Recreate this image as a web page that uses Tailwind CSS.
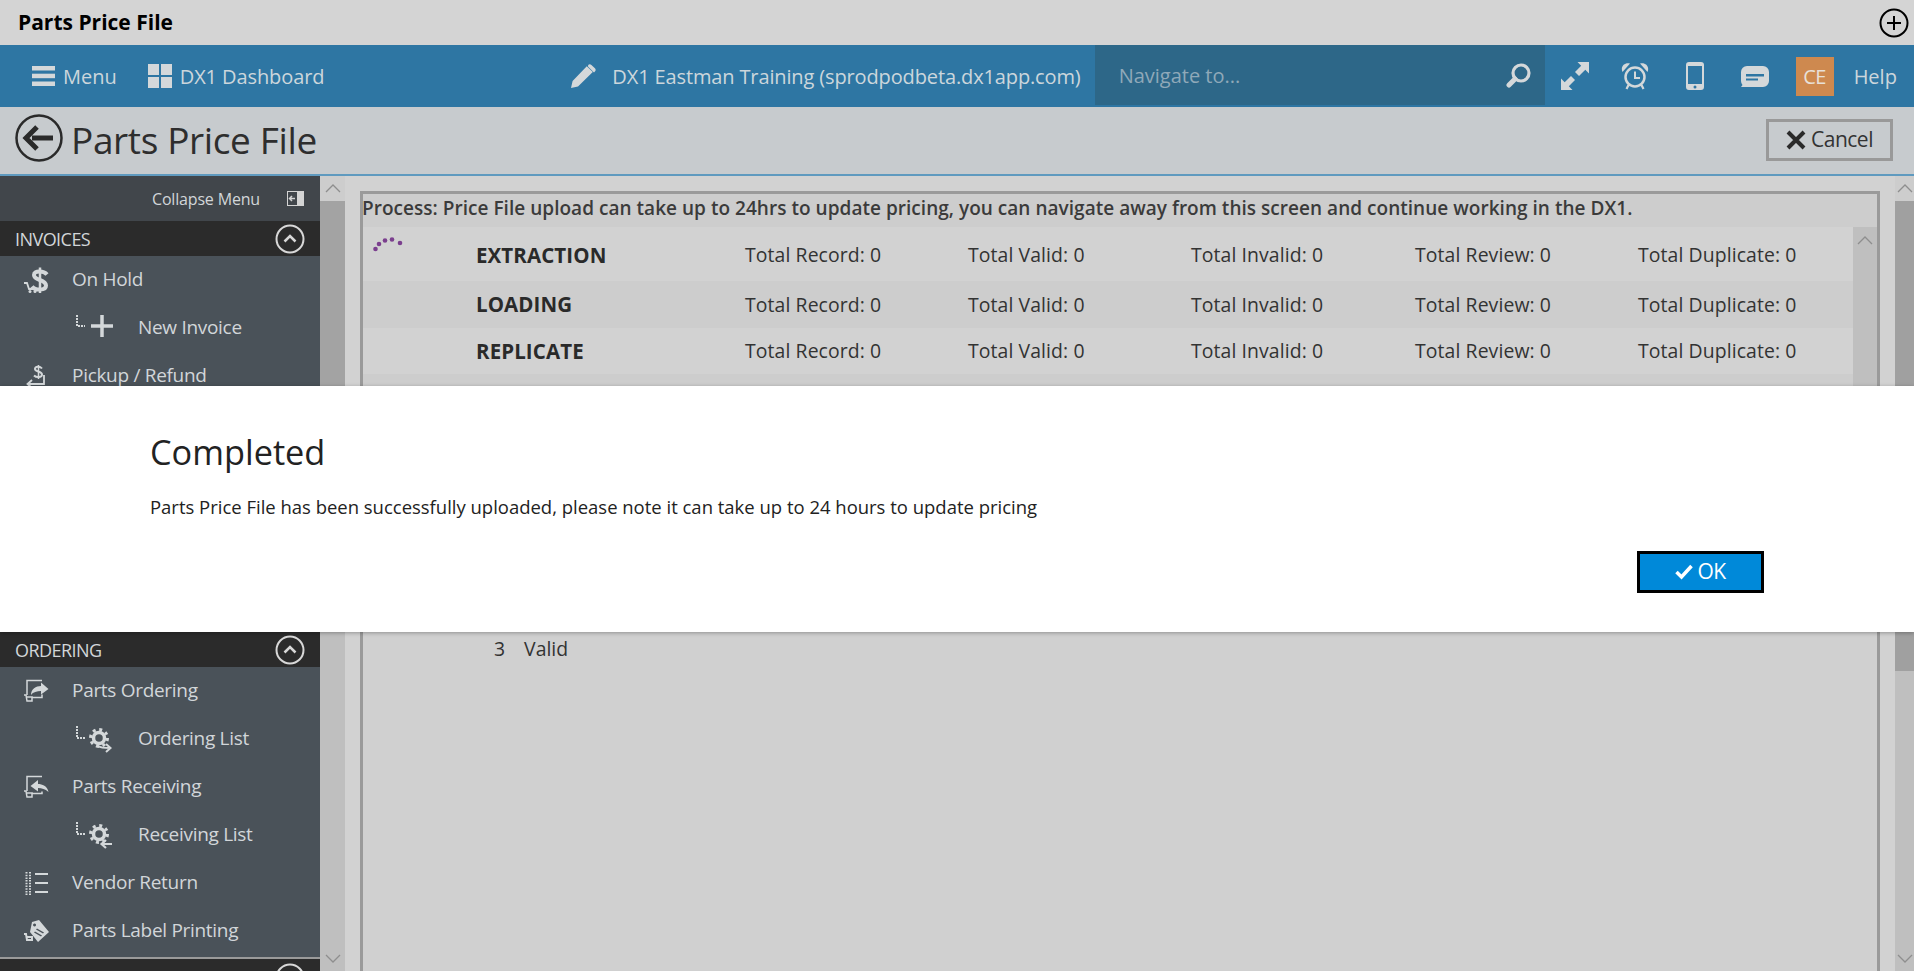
<!DOCTYPE html>
<html><head><meta charset="utf-8"><script src="https://cdn.jsdelivr.net/npm/@tailwindcss/browser@4"></script></head>
<body class="m-0 overflow-hidden">
<div class="relative flex h-[971px] w-[1914px] flex-col overflow-hidden bg-[#d2d2d2] font-['Open_Sans','Noto_Sans',sans-serif] text-[#333]">

<!-- title bar -->
<header class="flex h-[45px] shrink-0 items-center justify-between bg-[#d4d4d4] pl-[18px] pr-[5px]">
  <h1 class="text-[21px] font-bold text-black">Parts Price File</h1>
  <svg class="h-[30px] w-[30px]" viewBox="0 0 30 30" fill="none" stroke="#000" stroke-width="2"><circle cx="15" cy="15" r="13.5"/><path d="M8 15h14M15 8v14"/></svg>
</header>

<!-- nav -->
<nav class="flex h-[62px] shrink-0 items-center bg-[#2e76a3] text-[20px] text-[#ccd6dc]">
  <div class="flex items-center pl-[32px]">
    <svg class="h-[20px] w-[23px]" viewBox="0 0 23 20" fill="#d4d8da"><rect width="23" height="4.5"/><rect y="7.7" width="23" height="4.5"/><rect y="15.5" width="23" height="4.5"/></svg>
    <span class="ml-[8px] pt-[2px]">Menu</span>
  </div>
  <div class="ml-[31px] flex items-center">
    <svg class="h-[24px] w-[24px]" viewBox="0 0 24 24" fill="#d4d8da"><rect width="11" height="11"/><rect x="13" width="11" height="11"/><rect y="13" width="11" height="11"/><rect x="13" y="13" width="11" height="11"/></svg>
    <span class="ml-[8px] pt-[2px] tracking-[-0.1px]">DX1 Dashboard</span>
  </div>
  <div class="ml-[247px] flex items-center">
    <svg class="h-[24px] w-[25px]" viewBox="0 0 25 24" fill="#d4d8da"><path d="M0 24l1.600-7L15.800 2.200l6 5.800L7 22.500zM17.200.9c1-1 2.200-1 3.200 0l3.500 3.400c1 1 1 2.200 0 3.200l-.9 .9-6-5.800z"/></svg>
    <span class="ml-[16px] pt-[2px] tracking-[-0.13px]">DX1 Eastman Training (sprodpodbeta.dx1app.com)</span>
  </div>
  <div class="ml-[14px] flex h-[60px] w-[450px] items-center justify-between self-start bg-[#2d6788] pl-[24px] pr-[14px] text-[#8fa9b9]">
    <span class="pt-[2px]">Navigate to...</span>
    <svg class="h-[25px] w-[25px]" viewBox="0 0 25 25" fill="none" stroke="#d4d8da"><circle cx="15" cy="10" r="8" stroke-width="3.200"/><path d="M9 16L3 22" stroke-width="5" stroke-linecap="round"/></svg>
  </div>
  <div class="flex flex-1 items-center">
    <svg class="ml-[16px] h-[28px] w-[28px]" viewBox="0 0 28 28" fill="#d4d8da"><path d="M16.500 0H28V11.500L24.300 7.800 18 14 14 10 20.200 3.700zM11.500 28H0V16.500L3.700 20.200 10 14 14 18 7.800 24.300z"/></svg>
    <svg class="ml-[32px] h-[28px] w-[28px]" viewBox="0 0 28 28" fill="none" stroke="#d4d8da"><circle cx="14" cy="15" r="9.500" stroke-width="2.500"/><path d="M14 9.500V16h5" stroke-width="2"/><path d="M1.500 10C-1 4 4 0 9 1.500zM26.500 10C29 4 24 0 19 1.500z" fill="#d4d8da" stroke="none"/><path d="M7.500 23l-2 4M20.500 23l2 4" stroke-width="2.200"/></svg>
    <svg class="ml-[37px] h-[28px] w-[18px]" viewBox="0 0 18 28" fill="#d4d8da"><path fill-rule="evenodd" d="M3 0h12a3 3 0 0 1 3 3v22a3 3 0 0 1-3 3H3a3 3 0 0 1-3-3V3a3 3 0 0 1 3-3zM2 4v18h14V4z"/><circle cx="9" cy="25" r="1.500" fill="#2e76a3"/></svg>
    <svg class="ml-[37px] h-[21px] w-[28px]" viewBox="0 0 28 21" fill="#d4d8da"><path fill-rule="evenodd" d="M6 0h16a6 6 0 0 1 6 6v9a6 6 0 0 1-6 6H0l1.500-2A6 6 0 0 1 0 15V6a6 6 0 0 1 6-6zM5 8v2.400h18V8zM5 12.500v2.100h12v-2.100z"/></svg>
    <span class="ml-[27px] flex h-[39px] w-[38px] items-center justify-center bg-[#ce894f] pt-[2px] tracking-[-0.5px] text-[#e8e0d8]">CE</span>
    <span class="ml-[20px] pt-[2px]">Help</span>
  </div>
</nav>

<!-- page header -->
<div class="flex h-[69px] shrink-0 items-center justify-between border-b-2 border-[#5f9abf] bg-[#c7cbce] pl-[15px] pr-[21px]">
  <div class="flex items-center">
    <svg class="mb-[5px] h-[48px] w-[48px]" viewBox="0 0 48 48" fill="none" stroke="#2a2a2a"><circle cx="24" cy="24" r="22.500" stroke-width="2.500"/><path d="M38 24H17" stroke-width="5"/><path d="M22 13L11 24l11 11" stroke-width="5"/></svg>
    <span class="mb-[2px] ml-[8px] text-[37px] tracking-[-0.37px] text-[#2e2e2e]">Parts Price File</span>
  </div>
  <button class="mb-[2px] flex h-[42px] w-[127px] items-center justify-center border-[3px] border-[#999] text-[21px] tracking-[-0.5px] text-[#333]">
    <svg class="mr-[5px] h-[20px] w-[20px]" viewBox="0 0 20 20" stroke="#2a2a2a" stroke-width="4"><path d="M2 2l16 16M18 2L2 18"/></svg>Cancel
  </button>
</div>

<div class="flex min-h-0 flex-1">
  <!-- sidebar -->
  <aside class="w-[320px] shrink-0 overflow-hidden bg-[#4a5259] text-[19px] tracking-[-0.3px] text-[#d2d6d9]">
    <div class="flex h-[45px] items-center justify-end bg-[#41464b] pr-[16px] text-[16px] tracking-[-0.17px]">
      <span class="mr-[27px]">Collapse Menu</span>
      <svg class="h-[15px] w-[17px]" viewBox="0 0 17 15"><rect x=".5" y=".5" width="16" height="14" fill="none" stroke="#d4d4d4"/><rect x="10" y="1" width="6" height="13" fill="#d4d4d4"/><path d="M8 7.500H3M5 5L2.500 7.500 5 10" stroke="#d4d4d4" stroke-width="1.500" fill="none"/></svg>
    </div>
    <div class="flex h-[35px] items-center justify-between bg-[#2b2b2b] px-[15px] text-[18px] tracking-[-0.55px]">
      <span class="pt-[2px]">INVOICES</span>
      <svg class="h-[30px] w-[30px]" viewBox="0 0 30 30" fill="none" stroke="#d8d8d8"><circle cx="15" cy="15" r="13.500" stroke-width="2"/><path d="M9.500 17.500L15 12l5.500 5.500" stroke-width="2.500"/></svg>
    </div>
    <div class="flex h-[48px] items-center pl-[24px]">
      <svg class="h-[28px] w-[26px]" viewBox="0 0 26 28" fill="none" stroke="#d4d8da"><path d="M23 8.500C20 5 10 4 10 9c0 6 12 4 12 10.500C22 25 11 24.500 8 20.500" stroke-width="4"/><path d="M16 1.500V27" stroke-width="2.500"/><path d="M0 17h3l2 6h7" stroke-width="1.800"/><circle cx="6" cy="25.500" r="1.500" fill="#d4d8da" stroke="none"/><circle cx="11" cy="25.500" r="1.500" fill="#d4d8da" stroke="none"/></svg>
      <span class="ml-[22px] pb-[2px]">On Hold</span>
    </div>
    <div class="flex h-[48px] items-center pl-[75px]">
      <svg class="h-[26px] w-[38px]" viewBox="0 0 38 26"><path d="M2 0v11h8" stroke="#d4d8da" stroke-width="2" stroke-dasharray="2 1" fill="none"/><path d="M27 0v22M16 11h22" stroke="#d4d8da" stroke-width="3.500"/></svg>
      <span class="ml-[25px] pb-[2px]">New Invoice</span>
    </div>
    <div class="flex h-[48px] items-center pl-[24px]">
      <svg class="h-[24px] w-[24px]" viewBox="0 0 24 24" fill="none" stroke="#d4d8da"><path d="M18 4.500C16 2 11 2 11 5c0 3 7 2 7 5.500 0 3.500-6 3-8 1" stroke-width="2"/><path d="M14.500 1v14" stroke-width="1.500"/><path d="M20 11v9H4M8 16l-4.500 4L8 24" stroke-width="1.800"/></svg>
      <span class="ml-[24px] pb-[2px]">Pickup / Refund</span>
    </div>
    <div class="h-[232px]"></div>
    <div class="flex h-[35px] items-center justify-between bg-[#2b2b2b] px-[15px] text-[18px] tracking-[-0.55px]">
      <span class="pt-[2px]">ORDERING</span>
      <svg class="h-[30px] w-[30px]" viewBox="0 0 30 30" fill="none" stroke="#d8d8d8"><circle cx="15" cy="15" r="13.500" stroke-width="2"/><path d="M9.500 17.500L15 12l5.500 5.500" stroke-width="2.500"/></svg>
    </div>
    <div class="flex h-[48px] items-center pl-[24px]">
      <svg class="h-[24px] w-[25px]" viewBox="0 0 25 24" fill="none" stroke="#d4d8da" stroke-width="1.500"><path d="M3 16V1.500h15M8 18.500h10v-3"/><path d="M7 16C7 10 12 7 17 7V3.500L24.500 10 17 15.500V12C13 12 9 13 7 16z" fill="#d4d8da" stroke="none"/><path d="M0 16h2l1 6h5v-4H3"/></svg>
      <span class="ml-[23px] pb-[2px]">Parts Ordering</span>
    </div>
    <div class="flex h-[48px] items-center pl-[75px]">
      <svg class="h-[28px] w-[38px]" viewBox="0 0 38 28" fill="none" stroke="#d4d8da"><path d="M2 1v12h8" stroke-width="2" stroke-dasharray="2 1"/><circle cx="24" cy="13" r="5.500" stroke-width="3.500"/><circle cx="24" cy="13" r="8.500" stroke-width="3" stroke-dasharray="3 3.670"/><path d="M23 21c3 2 7 2 12 2M31 19l4.500 4-4.500 4" stroke-width="2"/></svg>
      <span class="ml-[25px] pb-[2px]">Ordering List</span>
    </div>
    <div class="flex h-[48px] items-center pl-[24px]">
      <svg class="h-[24px] w-[25px]" viewBox="0 0 25 24" fill="none" stroke="#d4d8da" stroke-width="1.500"><path d="M3 16V1.500h15M8 18.500h10v-2"/><path d="M24.500 17C23.500 11 18 9 14 9V5L6.500 11 14 16.500V13C18 13 21 14 24.500 17z" fill="#d4d8da" stroke="none"/><path d="M0 16h2l1 6h5v-4H3"/></svg>
      <span class="ml-[23px] pb-[2px]">Parts Receiving</span>
    </div>
    <div class="flex h-[48px] items-center pl-[75px]">
      <svg class="h-[28px] w-[38px]" viewBox="0 0 38 28" fill="none" stroke="#d4d8da"><path d="M2 1v12h8" stroke-width="2" stroke-dasharray="2 1"/><circle cx="24" cy="13" r="5.500" stroke-width="3.500"/><circle cx="24" cy="13" r="8.500" stroke-width="3" stroke-dasharray="3 3.670"/><path d="M37 23H27M31 19l-4.500 4 4.500 4" stroke-width="2.200"/></svg>
      <span class="ml-[25px] pb-[2px]">Receiving List</span>
    </div>
    <div class="flex h-[48px] items-center pl-[24px]">
      <svg class="h-[24px] w-[24px]" viewBox="0 0 24 24" fill="none" stroke="#d4d8da"><path d="M2.500 1v23M6 1v23" stroke-width="2" stroke-dasharray="1.500 1.200"/><path d="M11 3h13M11 12h13M11 21h13" stroke-width="2"/></svg>
      <span class="ml-[24px] pb-[2px]">Vendor Return</span>
    </div>
    <div class="flex h-[48px] items-center pl-[24px]">
      <svg class="h-[24px] w-[25px]" viewBox="0 0 25 24" fill="#d4d8da"><path fill-rule="evenodd" d="M8 3l7-2 10 12-11 10-8-10zM10.500 4.500a1.500 1.500 0 1 0 .1 0zM13 9.500l-1 1 7 4 1-1zM11 12.500l-1 1 7 4 1-1z"/><path d="M0 15h2l1 6h5v-3H3" fill="none" stroke="#d4d8da" stroke-width="2"/></svg>
      <span class="ml-[23px] pb-[2px]">Parts Label Printing</span>
    </div>
    <div class="mt-[2px] h-[2px] bg-[#9a9a9a]"></div>
    <div class="flex h-[36px] items-start justify-end bg-[#2b2b2b] pr-[15px] pt-[4px]">
      <svg class="h-[30px] w-[30px]" viewBox="0 0 30 30" fill="none" stroke="#d8d8d8"><circle cx="15" cy="15" r="13.500" stroke-width="2"/></svg>
    </div>
  </aside>

  <!-- sidebar scroll -->
  <div class="flex w-[25px] shrink-0 flex-col bg-[#bfbfbf]">
    <div class="flex h-[25px] items-start justify-center bg-[#cdcdcd] pt-[7px]"><svg class="h-[10px] w-[16px]" viewBox="0 0 16 10" fill="none" stroke="#8e8e8e" stroke-width="1.300"><path d="M1 9l7-7 7 7"/></svg></div>
    <div class="h-[400px] bg-[#a3a3a3]"></div>
    <div class="flex-1"></div>
    <div class="flex justify-center pb-[7px]"><svg class="h-[10px] w-[16px]" viewBox="0 0 16 10" fill="none" stroke="#8e8e8e" stroke-width="1.300"><path d="M1 1l7 7 7-7"/></svg></div>
  </div>

  <!-- main -->
  <main class="flex min-w-0 flex-1 bg-[#d2d2d2] px-[15px] pt-[15px]">
    <section class="flex min-w-0 flex-1 flex-col border-x-[3px] border-t-[3px] border-[#9a9a9a]">
      <div class="flex h-[33px] shrink-0 items-center whitespace-nowrap bg-[#cdcdcd] pb-[5px] text-[19px] font-semibold tracking-[0.03px] text-[#3b3b3b]"><span class="-ml-[1px]">Process: Price File upload can take up to 24hrs to update pricing, you can navigate away from this screen and continue working in the DX1.</span></div>
      <div class="flex h-[405px] shrink-0">
        <div class="min-w-0 flex-1 whitespace-nowrap text-[19.400px] tracking-[0.1px]">
          <div class="relative grid h-[54px] grid-cols-[269px_223px_223px_224px_223px_1fr] items-center bg-[#d2d2d2] pl-[113px] pt-[2px]">
            <svg class="absolute left-[10px] top-[9px] h-[18px] w-[32px]" viewBox="0 0 32 18" fill="#7b3f8e"><circle cx="2.500" cy="13" r="2.300"/><circle cx="6" cy="8" r="2.300"/><circle cx="12" cy="4.500" r="2.300"/><circle cx="19" cy="3.500" r="2.300"/><circle cx="27" cy="7" r="2.300"/></svg>
            <b class="text-[20.500px] font-bold text-[#2a2a2a]">EXTRACTION</b><span>Total Record: 0</span><span>Total Valid: 0</span><span>Total Invalid: 0</span><span>Total Review: 0</span><span>Total Duplicate: 0</span>
          </div>
          <div class="grid h-[47px] grid-cols-[269px_223px_223px_224px_223px_1fr] items-center bg-[#cdcdcd] pl-[113px]">
            <b class="text-[20.500px] font-bold text-[#2a2a2a]">LOADING</b><span>Total Record: 0</span><span>Total Valid: 0</span><span>Total Invalid: 0</span><span>Total Review: 0</span><span>Total Duplicate: 0</span>
          </div>
          <div class="grid h-[46px] grid-cols-[269px_223px_223px_224px_223px_1fr] items-center bg-[#d2d2d2] pl-[113px]">
            <b class="text-[20.500px] font-bold text-[#2a2a2a]">REPLICATE</b><span>Total Record: 0</span><span>Total Valid: 0</span><span>Total Invalid: 0</span><span>Total Review: 0</span><span>Total Duplicate: 0</span>
          </div>
          <div class="h-[258px] bg-[#cdcdcd]"></div>
        </div>
        <div class="flex w-[24px] shrink-0 justify-center bg-[#bfbfbf] pt-[8px]"><svg class="h-[10px] w-[16px]" viewBox="0 0 16 10" fill="none" stroke="#8e8e8e" stroke-width="1.300"><path d="M1 9l7-7 7 7"/></svg></div>
      </div>
      <div class="flex-1 bg-[#d0d0d0] text-[19.400px]">
        <div class="flex h-[34px] items-center pl-[131px]"><span>3</span><span class="ml-[19px]">Valid</span></div>
      </div>
    </section>
  </main>

  <!-- page scroll -->
  <div class="flex w-[19px] shrink-0 flex-col bg-[#bfbfbf]">
    <div class="flex h-[25px] items-start justify-center bg-[#cdcdcd] pt-[7px]"><svg class="h-[10px] w-[16px]" viewBox="0 0 16 10" fill="none" stroke="#8e8e8e" stroke-width="1.300"><path d="M1 9l7-7 7 7"/></svg></div>
    <div class="h-[470px] bg-[#a0a0a0]"></div>
    <div class="flex-1"></div>
    <div class="flex justify-center pb-[7px]"><svg class="h-[10px] w-[16px]" viewBox="0 0 16 10" fill="none" stroke="#8e8e8e" stroke-width="1.300"><path d="M1 1l7 7 7-7"/></svg></div>
  </div>
</div>

<!-- dialog -->
<div class="absolute inset-x-0 top-[386px] h-[246px] bg-white px-[150px] shadow-[0_1px_4px_rgba(0,0,0,0.3)]">
  <h2 class="mt-[44px] text-[34.300px] leading-[44px] text-[#222]">Completed</h2>
  <p class="mt-[20px] text-[18.480px] leading-[26px] text-[#222]">Parts Price File has been successfully uploaded, please note it can take up to 24 hours to update pricing</p>
  <div class="absolute right-[150px] top-[165px]">
    <button class="flex h-[42px] w-[127px] items-center justify-center border-[3px] border-black bg-[#0089d9] text-[21px] tracking-[-0.5px] text-white">
      <svg class="mr-[4px] h-[16px] w-[18px]" viewBox="0 0 18 16" fill="none" stroke="#fff" stroke-width="3.500"><path d="M1.500 8l5 5L16.500 2"/></svg>OK
    </button>
  </div>
</div>
</div>
</body></html>
